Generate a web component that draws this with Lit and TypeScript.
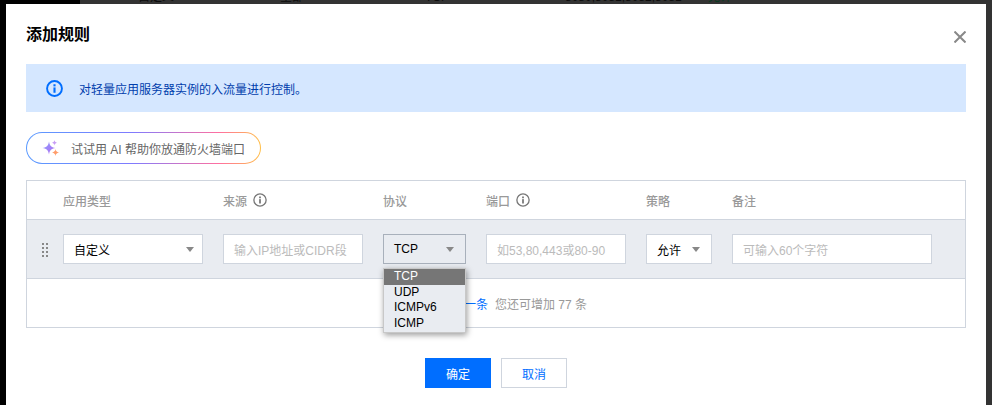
import { LitElement, html, css } from "lit";
import { customElement } from "lit/decorators.js";

const info = (size: number, color: string, sw: number) => html`<svg width=${size} height=${size} viewBox="0 0 16 16" fill="none">
  <circle cx="8" cy="8" r="7" stroke=${color} stroke-width=${sw}></circle>
  <rect x="7" y="7" width="2" height="5" fill=${color}></rect>
  <rect x="7" y="4" width="2" height="2" fill=${color}></rect>
</svg>`;

const caret = html`<i class="caret"></i>`;

@customElement("app-root")
export class AppRoot extends LitElement {
  static styles = css`
    :host { display: block; width: 992px; height: 405px; overflow: hidden; position: relative;
      background: #333; font-family: "Liberation Sans", "Noto Sans CJK SC", sans-serif; font-size: 12px; color: #000; }
    * { box-sizing: border-box; }
    .backdrop-left { position: absolute; left: 0; top: 0; width: 80px; height: 4px; background: #000; }
    .black-edge { position: absolute; left: 0; top: 0; width: 6px; height: 405px; background: #000; }
    .peek { position: absolute; top: -10px; font-size: 12px; line-height: 14px; color: #0c0c0c; white-space: nowrap; }
    .peek.green { color: #0b3a22; }
    .dialog { position: absolute; left: 6px; top: 4px; width: 980px; height: 401px; background: #fff;
      padding: 0 20px; display: flex; flex-direction: column; }
    .head { height: 60px; display: flex; align-items: center; justify-content: space-between; }
    .title { font-size: 16px; font-weight: 700; color: #000; line-height: 24px; margin-top: 2px; }
    .close { display: block; margin-top: 6px; }
    .alert { height: 48px; background: #d5e7ff; display: flex; align-items: center; padding-left: 20px; gap: 16px; color: #003dac; }
    .alert svg { display: block; }
    .ai { margin-top: 20px; width: 235px; height: 32px; border-radius: 16px; padding: 1px; display: flex;
      background: linear-gradient(90deg, #5b9bff 0%, #7f7bff 45%, #ff6fa0 82%, #ffc04a 100%); }
    .ai-in { flex: 1; border-radius: 15px; background: #fff; display: flex; align-items: center; padding-left: 14px; gap: 10px; color: #666; font-size: 12px; }
    .table { margin-top: 16px; border: 1px solid #cfd5de; height: 148px; display: flex; flex-direction: column; }
    .thead, .row { display: grid; grid-template-columns: 140px 140px 83px 140px 66px 200px; column-gap: 20px; padding-left: 36px; }
    .thead { height: 39px; align-items: center; color: #999; font-weight: 500; border-bottom: 1px solid #cfd5de; }
    .thead span { display: flex; align-items: center; gap: 6px; }
    .row { height: 59px; background: #e9ecf1; align-items: center; border-bottom: 1px solid #cfd5de; position: relative; }
    .grip { position: absolute; left: 15px; top: 23px; width: 6px; height: 14px; display: grid; grid-template-columns: 2px 2px; gap: 2px; }
    .grip b { width: 2px; height: 2px; background: #888; display: block; }
    .ctl { height: 30px; background: #fff; border: 1px solid #cfd5de; display: flex; align-items: center; justify-content: space-between; padding: 0 11px 0 10px; color: #000; }
    .ctl.wide { padding-right: 8px; }
    .ctl.ph { color: #bbb; justify-content: flex-start; }
    .ctl.active { background: #e9ecf1; border-color: #a8b0bb; }
    .caret { width: 0; height: 0; border-left: 4px solid transparent; border-right: 4px solid transparent; border-top: 5px solid #888; display: block; }
    .foot { flex: 1; display: flex; align-items: center; justify-content: center; padding-left: 35px; gap: 7px; }
    .add { color: #006eff; }
    .muted { color: #999; }
    .menu { position: absolute; left: 383px; top: 268px; width: 83px; background: #e9ecf1; border: 1px solid #c8c8c8; box-shadow: 1px 2px 6px rgba(0,0,0,.4); font-size: 12px; line-height: 15.5px; padding-bottom: 1px; }
    .menu div { padding-left: 10px; height: 15.5px; color: #000; }
    .menu .sel { background: #767676; color: #fff; }
    .actions { margin-top: 30px; display: flex; justify-content: center; gap: 10px; }
    .btn { width: 66px; height: 30px; display: flex; align-items: center; justify-content: center; }
    .primary { background: #006eff; color: #fff; }
    .ghost { background: #fff; border: 1px solid #cfd5de; color: #006eff; }
  `;

  render() {
    return html`
      <div class="backdrop-left"></div>
      <div class="black-edge"></div>
      <span class="peek" style="left:138px">自定义</span>
      <span class="peek" style="left:280px">全部</span>
      <span class="peek" style="left:425px">TCP</span>
      <span class="peek" style="left:565px">8080,8081,8082,8081</span>
      <span class="peek green" style="left:708px">允许</span>
      <div class="dialog">
        <div class="head">
          <div class="title">添加规则</div>
          <svg class="close" width="12" height="12" viewBox="0 0 12 12" fill="none">
            <path d="M0.5 0.5 L11.5 11.5 M11.5 0.5 L0.5 11.5" stroke="#888" stroke-width="2"></path>
          </svg>
        </div>
        <div class="alert">
          ${info(17, "#006eff", 1.8)}
          <span>对轻量应用服务器实例的入流量进行控制。</span>
        </div>
        <div class="ai"><div class="ai-in">
          <svg width="20" height="20" viewBox="0 0 20 20">
            <defs><linearGradient id="sp" x1="0" y1="0" x2="1" y2="1"><stop offset="0" stop-color="#8a9bff"></stop><stop offset="1" stop-color="#b46cf0"></stop></linearGradient></defs>
            <path d="M8 3.5 C8.8 7.6 10 9.2 14.5 10 C10 10.8 8.8 12.4 8 16.5 C7.2 12.4 6 10.8 1.5 10 C6 9.2 7.2 7.6 8 3.5Z" fill="url(#sp)"></path>
            <path d="M14.5 11 C14.9 13.2 15.6 13.9 18 14.5 C15.6 15.1 14.9 15.8 14.5 18 C14.1 15.8 13.4 15.1 11 14.5 C13.4 13.9 14.1 13.2 14.5 11Z" fill="#ff9d6b"></path>
            <path d="M13.5 2 C13.7 3.6 14.3 4.3 16 4.8 C14.3 5.3 13.7 6 13.5 7.6 C13.3 6 12.7 5.3 11 4.8 C12.7 4.3 13.3 3.6 13.5 2Z" fill="#c79cf5"></path>
          </svg>
          <span>试试用 AI 帮助你放通防火墙端口</span>
        </div></div>
        <div class="table">
          <div class="thead">
            <span>应用类型</span>
            <span>来源 ${info(14, "#777", 1.5)}</span>
            <span>协议</span>
            <span>端口 ${info(14, "#777", 1.5)}</span>
            <span>策略</span>
            <span>备注</span>
          </div>
          <div class="row">
            <div class="grip">${[0, 1, 2, 3, 4, 5, 6, 7].map(() => html`<b></b>`)}</div>
            <div class="ctl wide"><span>自定义</span>${caret}</div>
            <div class="ctl ph">输入IP地址或CIDR段</div>
            <div class="ctl active"><span>TCP</span>${caret}</div>
            <div class="ctl ph">如53,80,443或80-90</div>
            <div class="ctl"><span>允许</span>${caret}</div>
            <div class="ctl ph">可输入60个字符</div>
          </div>
          <div class="foot"><span class="add">新增一条</span><span class="muted">您还可增加 77 条</span></div>
        </div>
        <div class="actions">
          <div class="btn primary">确定</div>
          <div class="btn ghost">取消</div>
        </div>
      </div>
      <div class="menu">
        <div class="sel">TCP</div><div>UDP</div><div>ICMPv6</div><div>ICMP</div>
      </div>
    `;
  }
}
